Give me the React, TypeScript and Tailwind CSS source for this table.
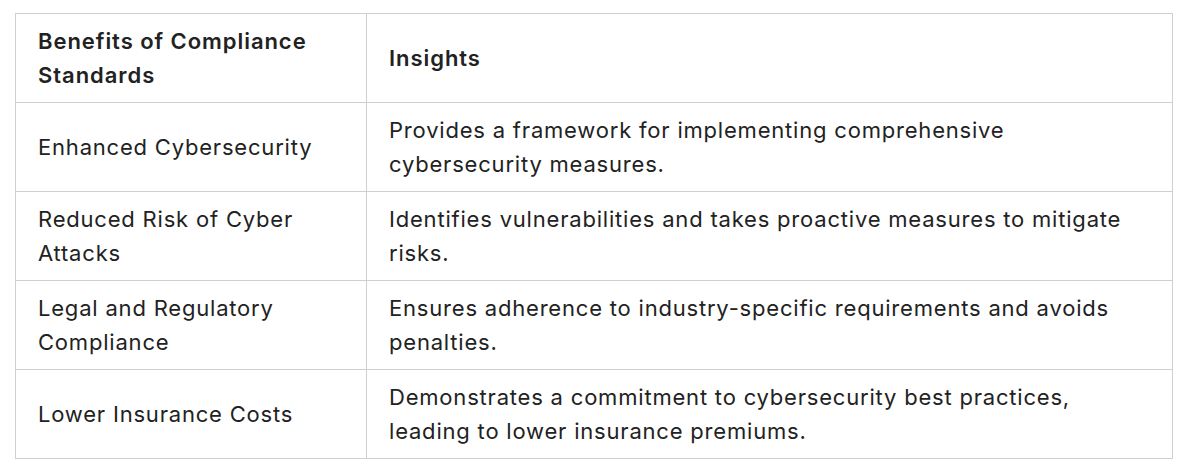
import React from "react";

const rows = [
  ["Enhanced Cybersecurity", "Provides a framework for implementing comprehensive cybersecurity measures."],
  ["Reduced Risk of Cyber Attacks", "Identifies vulnerabilities and takes proactive measures to mitigate risks."],
  ["Legal and Regulatory Compliance", "Ensures adherence to industry-specific requirements and avoids penalties."],
  ["Lower Insurance Costs", "Demonstrates a commitment to cybersecurity best practices, leading to lower insurance premiums."],
];

export default function App() {
  return (
    <div className="bg-white pt-[13px] pl-[15px]" style={{ fontFamily: "Inter, 'Noto Sans', sans-serif" }}>
      <table className="border-collapse w-[1158px] text-[22px] tracking-[0.8px] leading-[34px] text-[#222]">
        <colgroup>
          <col className="w-[351px]" />
          <col />
        </colgroup>
        <thead>
          <tr className="h-[89px]">
            <th className="border border-[#cfcfcf] px-[22px] py-[10px] text-left align-middle font-semibold tracking-[0.95px]">
              Benefits of Compliance Standards
            </th>
            <th className="border border-[#cfcfcf] px-[22px] py-[10px] text-left align-middle font-semibold tracking-[0.95px]">
              Insights
            </th>
          </tr>
        </thead>
        <tbody>
          {rows.map(([a, b]) => (
            <tr key={a} className="h-[89px]">
              <td className="border border-[#cfcfcf] px-[22px] py-[10px] align-middle">{a}</td>
              <td className="border border-[#cfcfcf] px-[22px] py-[10px] align-middle">{b}</td>
            </tr>
          ))}
        </tbody>
      </table>
    </div>
  );
}
